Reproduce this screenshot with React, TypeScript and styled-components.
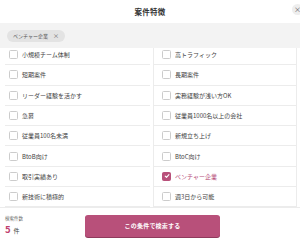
import React from 'react';
import styled, { createGlobalStyle } from 'styled-components';

const GlobalStyle = createGlobalStyle`
  html, body {
    margin: 0;
    padding: 0;
    background: #ffffff;
  }
  body {
    font-family: "Noto Sans CJK JP", "Noto Sans", sans-serif;
    color: #333333;
  }
`;

const Modal = styled.div`
  position: relative;
  width: 300px;
  height: 242px;
  overflow: hidden;
  background: #ffffff;
  display: flex;
  flex-direction: column;
`;

const Header = styled.div`
  height: 23px;
  display: flex;
  align-items: center;
  justify-content: center;
  font-size: 7.5px;
  font-weight: 700;
  color: #333333;
  letter-spacing: 0.3px;
`;

const CloseButton = styled.div`
  position: absolute;
  top: 4px;
  right: -3px;
  width: 11px;
  height: 11px;
  border-radius: 50%;
  background: #eeeeee;
  color: #555555;
  font-size: 7px;
  line-height: 11px;
  text-align: center;
`;

const SelectedBar = styled.div`
  height: 25px;
  background: #f3f3f3;
  display: flex;
  align-items: center;
  padding: 0 7px;
`;

const Chip = styled.div`
  display: flex;
  align-items: center;
  gap: 5px;
  height: 12px;
  padding: 0 6px;
  border-radius: 6px;
  background: #e3e3e3;
  font-size: 5px;
  color: #555555;
`;

const ChipClose = styled.span`
  font-size: 6px;
  color: #666666;
`;

const ListViewport = styled.div`
  height: 159px;
  overflow: hidden;
  padding: 0 3px 0 5px;
`;

const List = styled.div`
  display: grid;
  grid-template-columns: 145px 144px;
  column-gap: 3px;
  margin-top: -3px;
`;

const Cell = styled.div<{ $right?: boolean; $checked?: boolean }>`
  height: 19.3px;
  display: flex;
  align-items: center;
  gap: 4px;
  padding-left: ${p => (p.$right ? '8px' : '4px')};
  border-bottom: 1px solid #ececec;
  border-left: ${p => (p.$right ? '1px solid #ececec' : 'none')};
  border-right: ${p => (p.$right ? '1px solid #ececec' : 'none')};
  font-size: 6px;
  color: ${p => (p.$checked ? '#b8507a' : '#444444')};
  white-space: nowrap;
`;

const Box = styled.span<{ $checked?: boolean }>`
  flex: none;
  width: 7px;
  height: 7px;
  border-radius: 1.5px;
  border: 1px solid ${p => (p.$checked ? '#b8507a' : '#cccccc')};
  background: ${p => (p.$checked ? '#b8507a' : '#ffffff')};
  display: flex;
  align-items: center;
  justify-content: center;
`;

const Footer = styled.div`
  flex: 1;
  display: flex;
  align-items: center;
  padding: 1px 0 0 5px;
  border-top: 1px solid #ececec;
`;

const Count = styled.div`
  width: 80px;
  display: flex;
  flex-direction: column;
  gap: 1px;
`;

const CountLabel = styled.div`
  font-size: 4.5px;
  color: #666666;
`;

const CountValue = styled.div`
  display: flex;
  align-items: baseline;
  gap: 3px;
  font-size: 6px;
  color: #444444;
`;

const CountNumber = styled.span`
  font-size: 9.5px;
  font-weight: 700;
  color: #c0406f;
`;

const SearchButton = styled.button`
  width: 135px;
  height: 22px;
  border: none;
  border-radius: 3px;
  background: #b8507a;
  box-shadow: 0 1px 0 #8f3a5c;
  color: #ffffff;
  font-family: inherit;
  font-size: 6px;
  font-weight: 700;
  letter-spacing: 0.2px;
  padding: 0;
`;

const items: [string, boolean][] = [
  ['小規模チーム体制', false],
  ['高トラフィック', false],
  ['短期案件', false],
  ['長期案件', false],
  ['リーダー経験を活かす', false],
  ['実務経験が浅い方OK', false],
  ['急募', false],
  ['従業員1000名以上の会社', false],
  ['従業員100名未満', false],
  ['新規立ち上げ', false],
  ['BtoB向け', false],
  ['BtoC向け', false],
  ['取引実績あり', false],
  ['ベンチャー企業', true],
  ['新技術に積極的', false],
  ['週3日から可能', false],
];

const Check = () => (
  <svg width="6" height="6" viewBox="0 0 10 10">
    <path d="M2 5.2 L4.2 7.4 L8.2 2.8" fill="none" stroke="#fff" strokeWidth="1.8" strokeLinecap="round" strokeLinejoin="round" />
  </svg>
);

export default function App() {
  return (
    <>
      <GlobalStyle />
      <Modal>
        <Header>案件特徴</Header>
        <CloseButton>×</CloseButton>
        <SelectedBar>
          <Chip>
            ベンチャー企業<ChipClose>×</ChipClose>
          </Chip>
        </SelectedBar>
        <ListViewport>
          <List>
            {items.map(([label, checked], i) => (
              <Cell key={label} $right={i % 2 === 1} $checked={checked}>
                <Box $checked={checked}>{checked && <Check />}</Box>
                {label}
              </Cell>
            ))}
          </List>
        </ListViewport>
        <Footer>
          <Count>
            <CountLabel>検索件数</CountLabel>
            <CountValue>
              <CountNumber>5</CountNumber>件
            </CountValue>
          </Count>
          <SearchButton>この条件で検索する</SearchButton>
        </Footer>
      </Modal>
    </>
  );
}
